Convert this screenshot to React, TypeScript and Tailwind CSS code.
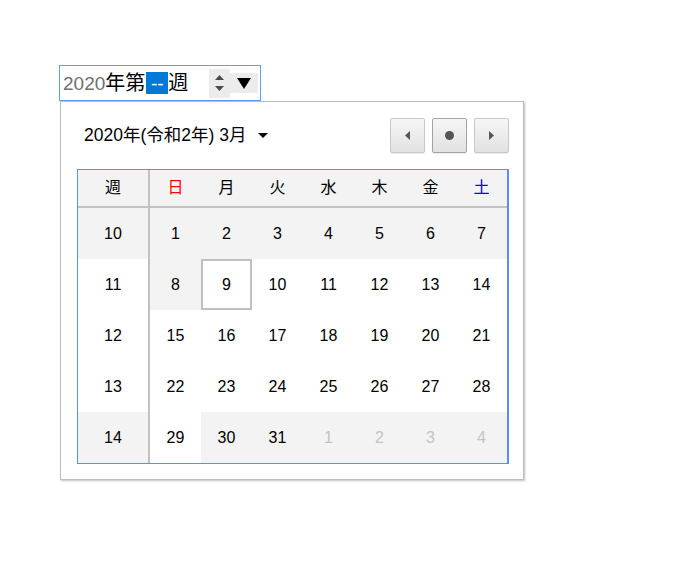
import React from "react"

const weekdays = [
  { label: "日", cls: "text-[#ff0000]" },
  { label: "月", cls: "text-black" },
  { label: "火", cls: "text-black" },
  { label: "水", cls: "text-black" },
  { label: "木", cls: "text-black" },
  { label: "金", cls: "text-black" },
  { label: "土", cls: "text-[#0000ff]" },
]

// 週番号と日付、shaded はグレー背景のセル
type Day = { n: number; other?: boolean; shaded?: boolean; selected?: boolean }
const rows: { week: number; shaded: boolean; days: Day[] }[] = [
  {
    week: 10,
    shaded: true,
    days: [1, 2, 3, 4, 5, 6, 7].map((n) => ({ n, shaded: true })),
  },
  {
    week: 11,
    shaded: false,
    days: [
      { n: 8, shaded: true },
      { n: 9, selected: true },
      { n: 10 },
      { n: 11 },
      { n: 12 },
      { n: 13 },
      { n: 14 },
    ],
  },
  { week: 12, shaded: false, days: [15, 16, 17, 18, 19, 20, 21].map((n) => ({ n })) },
  { week: 13, shaded: false, days: [22, 23, 24, 25, 26, 27, 28].map((n) => ({ n })) },
  {
    week: 14,
    shaded: true,
    days: [
      { n: 29 },
      { n: 30, shaded: true },
      { n: 31, shaded: true },
      { n: 1, other: true, shaded: true },
      { n: 2, other: true, shaded: true },
      { n: 3, other: true, shaded: true },
      { n: 4, other: true, shaded: true },
    ],
  },
]

function NavButton({ children, dark }: { children: React.ReactNode; dark?: boolean }) {
  return (
    <button
      className={
        "w-[35px] h-[35px] flex items-center justify-center rounded-[2px] border bg-gradient-to-b from-[#f6f6f6] to-[#e2e2e2] shadow-[0_1px_1px_rgba(0,0,0,0.08)] " +
        (dark ? "border-[#a3a3a3]" : "border-[#c8c8c8]")
      }
    >
      {children}
    </button>
  )
}

export default function App() {
  return (
    <div
      className="min-h-screen bg-white pl-[59px] pt-[65px]"
      style={{ fontFamily: '"Liberation Sans", "Noto Sans CJK JP", sans-serif' }}
    >
      {/* 入力欄 */}
      <div className="w-[202px] h-[36px] border border-[#5f9cf3] flex items-center pl-[3px] text-[19px] leading-none">
        <span className="text-[#6f6f6f]">2020</span>
        <span className="text-black text-[20px]">年第</span>
        <span className="ml-[1px] bg-[#0078d7] text-white w-[22px] h-[22px] flex items-center justify-center">--</span>
        <span className="text-black text-[20px]">週</span>
        <div className="ml-auto mr-[2px] flex items-center">
          <div className="w-[21px] h-[29px] bg-[#ececec] flex flex-col items-center justify-center gap-[6px]">
            <svg width="9" height="5" viewBox="0 0 9 5">
              <path d="M4.5 0 L9 5 L0 5 Z" fill="#4a4a4a" />
            </svg>
            <svg width="9" height="5" viewBox="0 0 9 5">
              <path d="M0 0 L9 0 L4.5 5 Z" fill="#4a4a4a" />
            </svg>
          </div>
          <div className="w-[28px] h-[20px] bg-[#ececec] flex items-center justify-center">
            <svg width="14" height="11" viewBox="0 0 14 11">
              <path d="M0 0 L14 0 L7 11 Z" fill="#000" />
            </svg>
          </div>
        </div>
      </div>

      {/* カレンダー */}
      <div className="ml-[1px] w-[464px] border border-[#bdbdbd] bg-white pt-[16px] pl-[16px] pr-[14px] pb-[15px] shadow-[1px_1px_2px_rgba(0,0,0,0.25)]">
        <div className="flex items-center h-[35px]">
          <div className="pl-[7px] flex items-center text-[17.5px] text-black">
            <span>2020年(令和2年) 3月</span>
            <svg className="ml-[12px]" width="10" height="5" viewBox="0 0 10 5">
              <path d="M0 0 L10 0 L5 5 Z" fill="#000" />
            </svg>
          </div>
          <div className="ml-auto flex gap-[7px]">
            <NavButton>
              <svg width="5" height="9" viewBox="0 0 5 9">
                <path d="M5 0 L5 9 L0 4.5 Z" fill="#555" />
              </svg>
            </NavButton>
            <NavButton dark>
              <span className="w-[9px] h-[9px] rounded-full bg-[#555]" />
            </NavButton>
            <NavButton>
              <svg width="5" height="9" viewBox="0 0 5 9">
                <path d="M0 0 L5 4.5 L0 9 Z" fill="#555" />
              </svg>
            </NavButton>
          </div>
        </div>

        <div className="mt-[16px] w-[432px] border-l border-t border-b border-r-2 border-[#5b8ff0] text-[16px] text-black">
          <div className="flex h-[38px] bg-[#f3f3f3] border-b-2 border-[#c2c2c2]">
            <div className="w-[72px] border-r-2 border-[#c2c2c2] flex items-center justify-center">週</div>
            {weekdays.map((w) => (
              <div key={w.label} className={"w-[51px] flex items-center justify-center " + w.cls}>
                {w.label}
              </div>
            ))}
          </div>
          {rows.map((r) => (
            <div key={r.week} className="flex h-[51px]">
              <div
                className={
                  "w-[72px] border-r-2 border-[#c2c2c2] flex items-center justify-center " +
                  (r.shaded ? "bg-[#f3f3f3]" : "bg-white")
                }
              >
                {r.week}
              </div>
              {r.days.map((d, i) => (
                <div
                  key={i}
                  className={
                    "w-[51px] flex items-center justify-center " +
                    (d.shaded ? "bg-[#f3f3f3] " : "bg-white ") +
                    (d.other ? "text-[#c4c4c4] " : "") +
                    (d.selected ? "border-2 border-[#c0c0c0]" : "")
                  }
                >
                  {d.n}
                </div>
              ))}
            </div>
          ))}
        </div>
      </div>
    </div>
  )
}
